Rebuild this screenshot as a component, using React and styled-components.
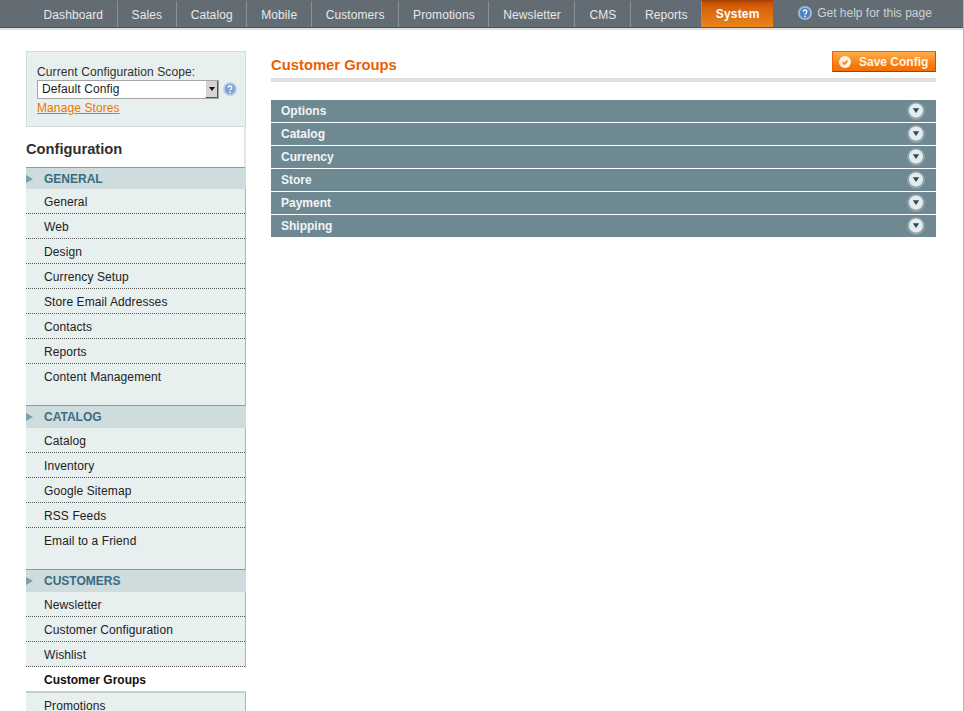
import React from 'react';
import styled, { createGlobalStyle } from 'styled-components';

const GlobalStyle = createGlobalStyle`
  html, body {
    margin: 0;
    padding: 0;
    height: 711px;
    overflow: hidden;
    background: #fff;
    font-family: 'Liberation Sans', Arial, sans-serif;
  }
`;

const Page = styled.div`
  width: 964px;
  height: 711px;
  overflow: hidden;
  box-sizing: border-box;
  border-right: 1px solid #b5b5b5;
`;

const Nav = styled.div`
  height: 27px;
  padding-left: 29.5px;
  display: flex;
  background: #636c72;
  border-bottom: 1px solid #4b5256;
  box-shadow: 0 2px 0 #dfdfdf;
`;

const NavItem = styled.div`
  height: 26px;
  line-height: 29px;
  padding: 0 13.5px 0 14px;
  font-size: 12px;
  letter-spacing: 0.1px;
  color: #e6e9ea;
  border-right: 1px solid #8b9195;
  margin-top: 1px;
`;

const ActiveItem = styled.div`
  width: 71px;
  height: 27px;
  line-height: 29px;
  text-align: center;
  font-size: 12px;
  font-weight: bold;
  color: #fff;
  letter-spacing: 0.2px;
  background: linear-gradient(#9c3f00 0, #c95207 3px, #d9650e 35%, #ea8519 100%);
`;

const HelpLink = styled.div`
  margin-left: 25px;
  display: flex;
  align-items: center;
  gap: 5px;
  height: 26px;
  font-size: 12px;
  color: #cdd2d5;
`;

const Body = styled.div`
  display: flex;
  padding: 23px 27px 0 26px;
  gap: 25px;
`;

const Side = styled.div`
  width: 220px;
  flex: none;
`;

const ScopeBox = styled.div`
  height: 76px;
  box-sizing: border-box;
  padding: 13px 8px 0 10px;
  background: #e7efef;
  border: 1px solid #d0dbdb;
  font-size: 12px;
  color: #2f2f2f;
`;

const ScopeLabel = styled.div`
  height: 14px;
  line-height: 14px;
  letter-spacing: 0.1px;
`;

const ScopeRow = styled.div`
  display: flex;
  align-items: center;
  gap: 4px;
  height: 20px;
`;

const FakeSelect = styled.div`
  width: 182px;
  height: 19px;
  flex: none;
  box-sizing: border-box;
  border: 1px solid #a5a5a5;
  background: #fff;
  padding-left: 4px;
  line-height: 17px;
  font-size: 12px;
  letter-spacing: 0.1px;
  color: #222;
  display: flex;
  justify-content: space-between;
`;

const SelectArrow = styled.div`
  width: 13px;
  height: 17px;
  background: #d4d4d4;
  border-left: 1px solid #fff;
  border-right: 1px solid #555;
  border-bottom: 1px solid #555;
  box-sizing: border-box;
  display: flex;
  align-items: center;
  justify-content: center;
  &::after {
    content: '';
    border: 3.5px solid transparent;
    border-top: 4px solid #111;
    border-bottom: 0;
  }
`;

const StoresLink = styled.div`
  margin-top: 2px;
  font-size: 12px;
  line-height: 15px;
  letter-spacing: 0.1px;
  color: #ea7601;
  text-decoration: underline;
`;

const ConfigTitle = styled.div`
  height: 41px;
  box-sizing: border-box;
  line-height: 44px;
  font-size: 14.7px;
  font-weight: bold;
  color: #2f2f2f;
  background: #fff;
  border-right: 2px solid #e6e6e6;
  border-bottom: 1px solid #8a9a9d;
`;

const TabHead = styled.div`
  height: ${(p) => (p.$first ? 21 : 22)}px;
  line-height: 23px;
  padding-left: 18px;
  position: relative;
  font-size: 12px;
  font-weight: bold;
  color: #376c82;
  background: #cfdcdd;
  &::before {
    content: '';
    position: absolute;
    left: 0;
    top: 7px;
    border: 4px solid transparent;
    border-left: 7px solid #7e9eaa;
    border-right: 0;
  }
`;

const TabGroup = styled.div`
  background: #e7efef;
  border-right: 1px solid #a9b6b7;
  padding-bottom: ${(p) => p.$gap}px;
  border-bottom: ${(p) => (p.$gap ? '1px solid #8a9a9d' : 'none')};
`;

const TabLink = styled.div`
  height: 25px;
  box-sizing: border-box;
  padding-left: 18px;
  line-height: 26px;
  font-size: 12px;
  letter-spacing: 0.1px;
  color: #222;
  border-bottom: ${(p) => (p.$plain ? 'none' : '1px dotted #555')};
  ${(p) =>
    p.$active &&
    `
    background: #fff;
    font-weight: bold;
    letter-spacing: 0;
    color: #111;
    margin-right: -1px;
    border-bottom: 2px solid #c4cfcf;
    height: 26px;
  `}
`;

const Main = styled.div`
  flex: 1;
  min-width: 0;
`;

const HeadRow = styled.div`
  height: 26px;
  padding-bottom: 1px;
  display: flex;
  justify-content: space-between;
  align-items: flex-start;
  border-bottom: 4px solid #dfdfdf;
  margin-bottom: 18px;
`;

const PageTitle = styled.h3`
  margin: 5px 0 0;
  font-size: 14.8px;
  line-height: 18px;
  font-weight: bold;
  color: #eb5e00;
`;

const SaveButton = styled.div`
  width: 104px;
  height: 21px;
  box-sizing: border-box;
  border: 1px solid #ed6502;
  border-bottom-color: #a04300;
  border-right-color: #c85300;
  background: linear-gradient(#ffac47, #f67a10 70%, #f26f08);
  display: flex;
  align-items: center;
  padding-left: 6px;
  gap: 8px;
  font-size: 12px;
  font-weight: bold;
  color: #fff4e4;
`;

const Bar = styled.div`
  height: 22px;
  margin-bottom: 1px;
  padding: 0 11px 0 10px;
  display: flex;
  justify-content: space-between;
  align-items: center;
  background: #6f8992;
  font-size: 12px;
  font-weight: bold;
  color: #f2f5f6;
`;

const HelpIcon = ({ size, rim, fill }) => (
  <svg width={size} height={size} viewBox="0 0 14 14" style={{ flex: 'none' }}>
    <circle cx="7" cy="7" r="7" fill={rim} />
    <circle cx="7" cy="7" r="5.2" fill={fill} />
    <path d="M5.2 5.6a1.8 1.8 0 1 1 2.8 1.6c-.7.4-1 .7-1 1.4" fill="none" stroke="#fff" strokeWidth="1.3" />
    <circle cx="7" cy="10.3" r=".9" fill="#fff" />
  </svg>
);

const CheckIcon = () => (
  <svg width="12" height="12" viewBox="0 0 12 12">
    <circle cx="6" cy="6" r="6" fill="#fff3e3" />
    <path d="M3.6 6.2l1.8 1.8 3-3.4" fill="none" stroke="#f07c13" strokeWidth="1.6" />
  </svg>
);

const CollapseIcon = () => (
  <svg width="18" height="18" viewBox="0 0 18 18">
    <circle cx="9" cy="9" r="9" fill="#8fa3ab" />
    <circle cx="9" cy="8.5" r="7" fill="#e4ecee" />
    <path d="M5.8 6.2h6.4L9 11z" fill="#2f4a57" />
  </svg>
);

const navItems = ['Dashboard', 'Sales', 'Catalog', 'Mobile', 'Customers', 'Promotions', 'Newsletter', 'CMS', 'Reports'];

const groups = [
  {
    title: 'GENERAL',
    first: true,
    links: ['General', 'Web', 'Design', 'Currency Setup', 'Store Email Addresses', 'Contacts', 'Reports', 'Content Management'],
  },
  {
    title: 'CATALOG',
    links: ['Catalog', 'Inventory', 'Google Sitemap', 'RSS Feeds', 'Email to a Friend'],
  },
];

const sections = ['Options', 'Catalog', 'Currency', 'Store', 'Payment', 'Shipping'];

export default function App() {
  return (
    <Page>
      <GlobalStyle />
      <Nav>
        {navItems.map((n) => (
          <NavItem key={n}>{n}</NavItem>
        ))}
        <ActiveItem>System</ActiveItem>
        <HelpLink>
          <HelpIcon size={14} rim="#9dbbdc" fill="#4f82bd" />
          Get help for this page
        </HelpLink>
      </Nav>
      <Body>
        <Side>
          <ScopeBox>
            <ScopeLabel>Current Configuration Scope:</ScopeLabel>
            <ScopeRow>
              <FakeSelect>
                Default Config
                <SelectArrow />
              </FakeSelect>
              <HelpIcon size={14} rim="#b9cfe6" fill="#7fa3cf" />
            </ScopeRow>
            <StoresLink>Manage Stores</StoresLink>
          </ScopeBox>
          <ConfigTitle>Configuration</ConfigTitle>
          {groups.map((g) => (
            <div key={g.title}>
              <TabHead $first={g.first}>{g.title}</TabHead>
              <TabGroup $gap={16}>
                {g.links.map((l, i) => (
                  <TabLink key={l} $plain={i === g.links.length - 1}>{l}</TabLink>
                ))}
              </TabGroup>
            </div>
          ))}
          <TabHead>CUSTOMERS</TabHead>
          <TabGroup $gap={0}>
            <TabLink>Newsletter</TabLink>
            <TabLink>Customer Configuration</TabLink>
            <TabLink>Wishlist</TabLink>
            <TabLink $active>Customer Groups</TabLink>
            <TabLink>Promotions</TabLink>
          </TabGroup>
        </Side>
        <Main>
          <HeadRow>
            <PageTitle>Customer Groups</PageTitle>
            <SaveButton>
              <CheckIcon />
              Save Config
            </SaveButton>
          </HeadRow>
          {sections.map((s) => (
            <Bar key={s}>
              {s}
              <CollapseIcon />
            </Bar>
          ))}
        </Main>
      </Body>
    </Page>
  );
}
